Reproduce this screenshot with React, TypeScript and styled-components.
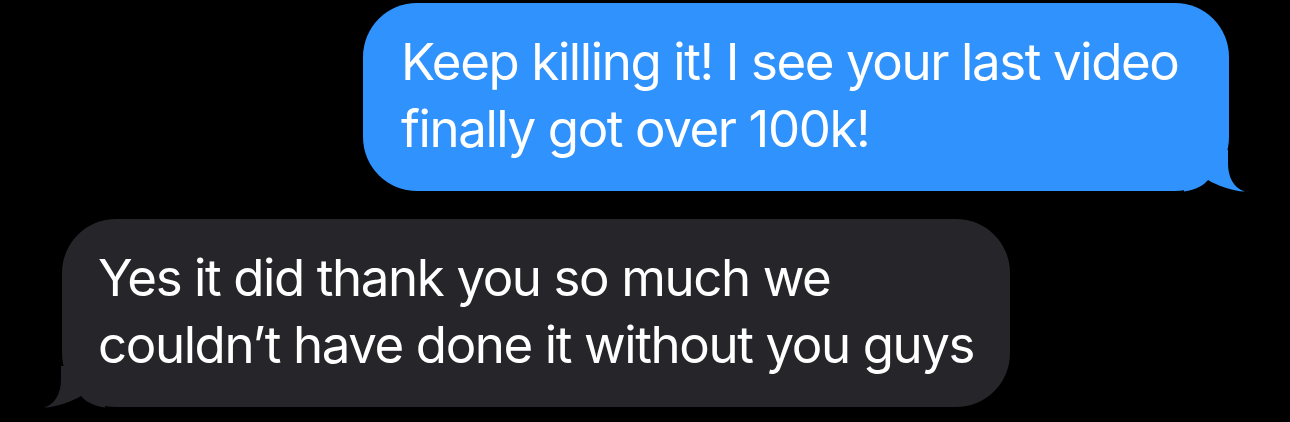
import React from "react";
import styled, { createGlobalStyle } from "styled-components";

const Global = createGlobalStyle`
  html, body { margin: 0; padding: 0; background: #000; }
  body { width: 1290px; height: 422px; overflow: hidden; }
`;

const Thread = styled.div`
  display: flex;
  flex-direction: column;
  gap: 28px;
  padding: 3px 61px 0 62px;
  font-family: Inter, "Noto Sans", sans-serif;
`;

const Bubble = styled.div<{ $sent?: boolean; $w: number }>`
  position: relative;
  box-sizing: border-box;
  width: ${(p) => p.$w}px;
  height: 188px;
  align-self: ${(p) => (p.$sent ? "flex-end" : "flex-start")};
  background: ${(p) => (p.$sent ? "#2f92fd" : "#26252a")};
  color: #fff;
  border-radius: 54px;
  padding: 25px 0 0 ${(p) => (p.$sent ? 38 : 36)}px;
  font-size: 51px;
  line-height: 67px;
  letter-spacing: -1.4px;
  white-space: nowrap;
`;

const Tail = styled.svg<{ $sent?: boolean }>`
  position: absolute;
  bottom: -0.5px;
  width: 62px;
  height: 42px;
  ${(p) => (p.$sent ? "right: -17px;" : "left: -19px; transform: scaleX(-1);")}
`;

const TailShape = ({ sent, color }: { sent?: boolean; color: string }) => (
  <Tail $sent={sent} viewBox="0 0 62 42">
    <path
      d="M44 0 L44 13 C44 28 50 38 61 41.6 C48 41 32 35 24 30 C20 35 12 40 0 41.6 L0 0 Z"
      fill={color}
    />
  </Tail>
);

export default function App() {
  return (
    <>
      <Global />
      <Thread>
        <Bubble $sent $w={866}>
          Keep killing it! I see your last video
          <br />
          finally got over 100k!
          <TailShape sent color="#2f92fd" />
        </Bubble>
        <Bubble $w={948}>
          Yes it did thank you so much we
          <br />
          couldn’t have done it without you guys
          <TailShape color="#26252a" />
        </Bubble>
      </Thread>
    </>
  );
}
